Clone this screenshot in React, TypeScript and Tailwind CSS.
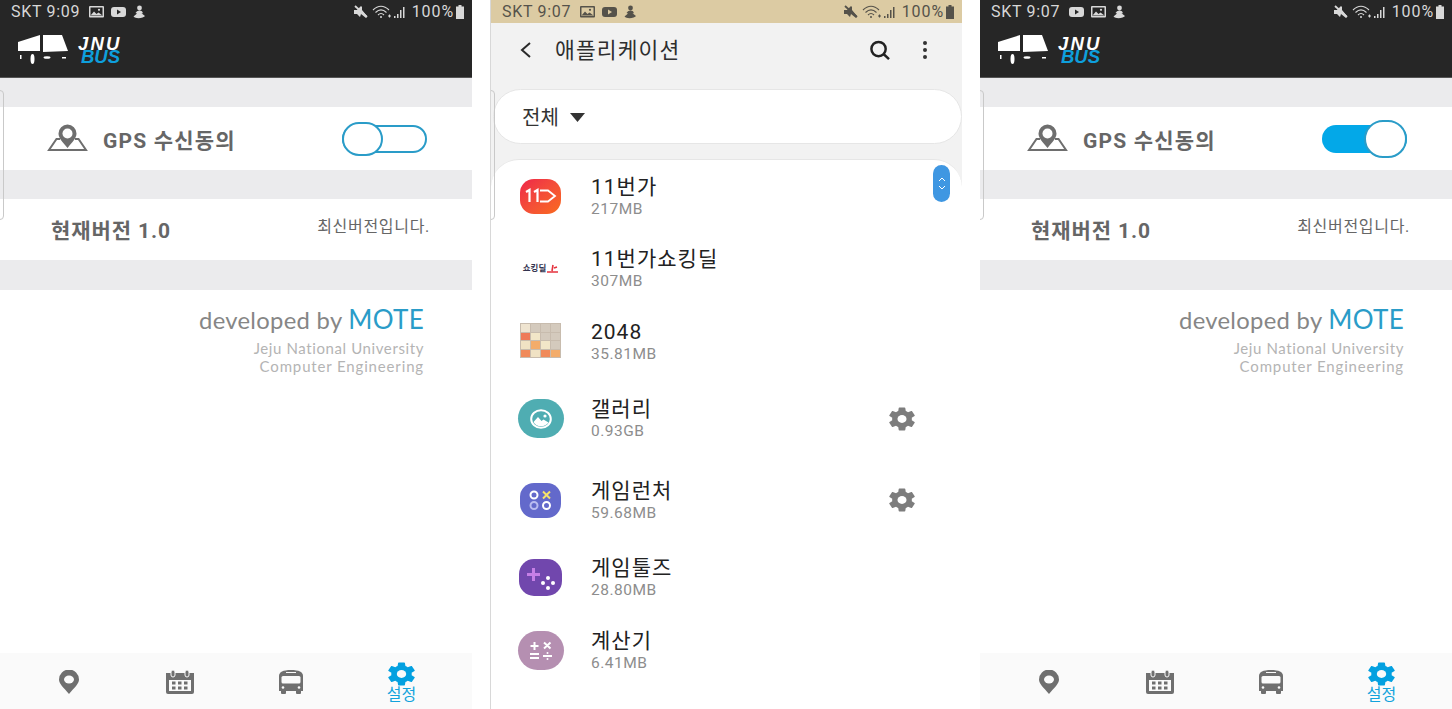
import type { ReactNode } from "react";

const KR = "font-['Roboto','Noto_Sans_CJK_KR',sans-serif]";

function StatusIcons({ dark }: { dark: boolean }) {
  const c = dark ? "#d8d8d8" : "#55524a";
  return (
    <div className="flex items-center">
      <svg width="16" height="14" viewBox="0 0 16 14" className="mr-[3px]">
        <path d="M1 5l3 0 4-4 1 1 0 3 5 6-1 2-5-4-1 3-3-3-3 0z" fill={c} />
        <path d="M2 1l12 11" stroke={c} strokeWidth="1.800" />
      </svg>
      <svg width="20" height="14" viewBox="0 0 20 14" fill="none" stroke={c} strokeWidth="1.100" className="mr-[1px]">
        <path d="M1 5c5-5 11-5 16 0" />
        <path d="M3.500 7.500c3.500-3.300 7.500-3.300 11 0" />
        <path d="M6 10c2-2 4-2 6 0" />
        <circle cx="9" cy="12" r="1" fill={c} stroke="none" />
        <path d="M16 11h3M17.500 9.500v3" />
      </svg>
      <svg width="14" height="14" viewBox="0 0 14 14" fill={c} className="mr-[5px]">
        <rect x="1" y="11" width="1.500" height="2" />
        <rect x="4" y="9" width="1.500" height="4" />
        <rect x="7" y="5" width="1.500" height="8" />
        <rect x="10" y="2" width="1.500" height="11" />
      </svg>
      <span className="text-[16px] tracking-[0.9px]" style={{ color: c }}>100%</span>
      <svg width="10" height="14" viewBox="0 0 10 14" fill={c} className="ml-[1px]">
        <path d="M3.500 0h3v1.500H9V14H1V1.500h2.500z" />
      </svg>
    </div>
  );
}

function PictureIcon({ c, bg }: { c: string; bg: string }) {
  return (
    <svg width="15" height="12" viewBox="0 0 15 12">
      <rect width="15" height="11.500" rx="1" fill={c} />
      <rect x="1.500" y="1.500" width="12" height="8.500" fill={bg} />
      <path d="M1.500 9.500l3.500-4 2.500 2.500 2-1.500 4 3z" fill={c} />
      <circle cx="10" cy="3.800" r="1.100" fill={c} />
    </svg>
  );
}

function VideoIcon({ c, bg }: { c: string; bg: string }) {
  return (
    <svg width="15" height="12" viewBox="0 0 15 12">
      <rect x="0" y="1" width="15" height="10" rx="3" fill={c} />
      <path d="M6 3.500v5l4-2.500z" fill={bg} />
    </svg>
  );
}

function PersonIcon({ c }: { c: string }) {
  return (
    <svg width="13" height="14" viewBox="0 0 13 14" fill={c}>
      <circle cx="6.500" cy="3" r="2.400" />
      <path d="M4 6.200c1.500-.8 3.500-.8 5 0l1 2-1.500 0 3.500 2.800c-1 2-9 3.500-11.500.5l3.500-3-1.500-.5z" />
    </svg>
  );
}

function StatusBar({
  time,
  dark,
  videoFirst,
}: {
  time: string;
  dark: boolean;
  videoFirst?: boolean;
}) {
  const c = dark ? "#d8d8d8" : "#55524a";
  const bg = dark ? "#262626" : "#dccba3";
  return (
    <div className={`flex h-[23px] items-center justify-between pl-[11px] pr-[7px] pt-[1px] ${dark ? "bg-[#262626]" : "bg-[#dccba3]"}`}>
      <div className="flex items-center">
        <span className="mr-[9px] text-[16px] tracking-[0.7px]" style={{ color: c }}>{time}</span>
        <div className="flex items-center gap-[7px]">
          {videoFirst ? <VideoIcon c={c} bg={bg} /> : <PictureIcon c={c} bg={bg} />}
          {videoFirst ? <PictureIcon c={c} bg={bg} /> : <VideoIcon c={c} bg={bg} />}
          <PersonIcon c={c} />
        </div>
      </div>
      <StatusIcons dark={dark} />
    </div>
  );
}

function BusLogo() {
  return (
    <div className="flex items-start">
      <svg width="52" height="31" viewBox="0 0 52 31" fill="#fff">
        <path d="M0 8L22 1v16H0z" />
        <path d="M25 1h19l6 16-25 1z" />
        <rect x="2" y="21" width="1.500" height="4" />
        <ellipse cx="14.500" cy="25" rx="2" ry="5" />
        <ellipse cx="29" cy="23.500" rx="3.500" ry="1.300" />
        <rect x="44" y="23" width="4" height="1.500" />
      </svg>
      <div className="ml-[8px] mt-[3px] flex flex-col font-['Liberation_Sans',sans-serif] text-[18.500px] font-bold italic leading-[13px]">
        <span className="tracking-[2.200px] text-white">JNU</span>
        <span className="ml-[3px] tracking-[0px] text-[#0e9fdc]">BUS</span>
      </div>
    </div>
  );
}

function MapPinIcon() {
  return (
    <svg width="41" height="29" viewBox="0 0 41 29" fill="none">
      <path d="M13 15H9.500L2 26h37l-7.500-11H28" stroke="#6e6e6e" strokeWidth="2" />
      <path d="M20.500 24c-5-6-9-10-9-14.500a9 9 0 0118 0c0 4.500-4 8.500-9 14.500z" fill="#6e6e6e" />
      <circle cx="20.500" cy="9.500" r="5" fill="#fff" />
    </svg>
  );
}

function NavPin() {
  return (
    <svg width="20" height="24" viewBox="0 0 20 24">
      <path d="M10 24C4 17 0 13.500 0 9.500a10 10 0 0120 0c0 4-4 7.500-10 14.500z" fill="#6f6f6f" />
      <ellipse cx="10" cy="9.500" rx="5" ry="4" fill="#fafafa" />
    </svg>
  );
}

function NavCalendar() {
  return (
    <svg width="28" height="24" viewBox="0 0 28 24">
      <path d="M0 3h28v19a2 2 0 01-2 2H2a2 2 0 01-2-2z" fill="#6f6f6f" />
      <rect x="5" y="0" width="4" height="7" rx="2" fill="#6f6f6f" stroke="#fafafa" strokeWidth="1" />
      <rect x="19" y="0" width="4" height="7" rx="2" fill="#6f6f6f" stroke="#fafafa" strokeWidth="1" />
      <rect x="3" y="10" width="22" height="11" fill="#fafafa" />
      <g fill="#6f6f6f">
        <rect x="6" y="11.500" width="3.500" height="3" />
        <rect x="12" y="11.500" width="3.500" height="3" />
        <rect x="18" y="11.500" width="3.500" height="3" />
        <rect x="6" y="16.500" width="3.500" height="3" />
        <rect x="12" y="16.500" width="3.500" height="3" />
        <rect x="18" y="16.500" width="3.500" height="3" />
      </g>
    </svg>
  );
}

function NavBus() {
  return (
    <svg width="24" height="24" viewBox="0 0 24 24">
      <path d="M0 6c0-4 4-6 12-6s12 2 12 6v15H0z" fill="#6f6f6f" />
      <rect x="2" y="20" width="5" height="4" rx="1" fill="#6f6f6f" />
      <rect x="17" y="20" width="5" height="4" rx="1" fill="#6f6f6f" />
      <rect x="2.500" y="6" width="19" height="7.500" rx="1.500" fill="#fafafa" />
      <rect x="7" y="2" width="10" height="1" fill="#fafafa" />
      <circle cx="4" cy="17.500" r="1.300" fill="#fafafa" />
      <circle cx="20" cy="17.500" r="1.300" fill="#fafafa" />
    </svg>
  );
}

const GEAR =
  "M19.140 12.940c.04-.3.06-.61.06-.94 0-.32-.02-.64-.07-.94l2.030-1.580c.18-.14.23-.41.12-.61l-1.920-3.320c-.12-.22-.37-.29-.59-.22l-2.390.96c-.5-.38-1.030-.7-1.620-.94l-.36-2.540c-.04-.24-.24-.41-.48-.41h-3.840c-.24 0-.43.17-.47.41l-.36 2.540c-.59.24-1.130.57-1.620.94l-2.390-.96c-.22-.08-.47 0-.59.22L2.740 8.870c-.12.21-.08.47.12.61l2.030 1.580c-.05.3-.09.63-.09.94s.02.64.07.94l-2.030 1.580c-.18.14-.23.41-.12.61l1.920 3.320c.12.22.37.29.59.22l2.390-.96c.5.38 1.030.7 1.620.94l.36 2.540c.05.24.24.41.48.41h3.840c.24 0 .44-.17.47-.41l.36-2.540c.59-.24 1.130-.56 1.620-.94l2.390.96c.22.08.47 0 .59-.22l1.920-3.320c.12-.22.07-.47-.12-.61l-2.010-1.580z";

function Gear({ color, hole, size }: { color: string; hole: string; size: string }) {
  return (
    <svg viewBox="2.500 2 19 20" preserveAspectRatio="none" className={size}>
      <path d={GEAR} fill={color} />
      <circle cx="12" cy="12" r="3.300" fill={hole} />
    </svg>
  );
}

function Toggle({ on }: { on: boolean }) {
  if (on) {
    return (
      <div className="relative h-[28px] w-[85px] rounded-full bg-[#03a8e8]">
        <div className="absolute right-0 top-[-5px] h-[38px] w-[43px] rounded-full border-2 border-[#2a9cc8] bg-white" />
      </div>
    );
  }
  return (
    <div className="relative h-[28px] w-[85px] rounded-full border-2 border-[#2a9cc8] bg-white">
      <div className="absolute left-[-2px] top-[-5px] h-[34px] w-[41px] rounded-full border-2 border-[#2a9cc8] bg-white" />
    </div>
  );
}

function EdgeOutline() {
  return <div className="absolute left-[-8px] top-[90px] h-[130px] w-[12px] rounded-[4px] border border-[#c9c9c9]" />;
}

function SettingsPanel({
  time,
  on,
  videoFirst,
}: {
  time: string;
  on: boolean;
  videoFirst?: boolean;
}) {
  return (
    <div className="relative flex h-[709px] w-[472px] shrink-0 flex-col overflow-hidden bg-white">
      <StatusBar time={time} dark videoFirst={videoFirst} />
      <div className="h-[55px] border-b border-[#555] bg-[#262626] pl-[18px] pt-[11px]">
        <BusLogo />
      </div>
      <div className="h-[29px] bg-[#ebebed]" />
      <div className="flex h-[63px] items-center justify-between pl-[47px] pr-[45px]">
        <div className="flex items-center">
          <MapPinIcon />
          <span className="ml-[15px] mt-[7px] text-[21px] font-bold tracking-[1.200px] text-[#666]">GPS 수신동의</span>
        </div>
        <Toggle on={on} />
      </div>
      <div className="h-[29px] bg-[#ebebed]" />
      <div className="flex h-[61px] items-start justify-between pl-[51px] pr-[42px]">
        <span className="mt-[17px] text-[21px] font-bold tracking-[0.9px] text-[#666]">현재버전 1.0</span>
        <span className="mt-[16px] text-[16px] tracking-[0.7px] text-[#666]">최신버전입니다.</span>
      </div>
      <div className="h-[30px] bg-[#ebebed]" />
      <div className="flex flex-1 flex-col items-end pr-[48px] pt-[13px] font-['Lato',sans-serif]">
        <div className="text-[23.800px] leading-[33px] tracking-[0.3px] text-[#868686]">
          developed by <span className="text-[26px] text-[#2a9cc8]">MOTE</span>
        </div>
        <div className="mt-[2px] text-[15px] leading-[19px] tracking-[0.6px] text-[#b4b4b4]">Jeju National University</div>
        <div className="mt-[-1px] text-[15px] leading-[19px] tracking-[0.85px] text-[#b4b4b4]">Computer Engineering</div>
      </div>
      <div className="grid h-[56px] grid-cols-[111px_111px_111px_111px] bg-[#fafafa] pl-[13px]">
        <NavCell><NavPin /></NavCell>
        <NavCell><NavCalendar /></NavCell>
        <NavCell><NavBus /></NavCell>
        <div className="flex flex-col items-center pt-[9px]">
          <Gear color="#03a0e0" hole="#fafafa" size="h-[24px] w-[27px]" />
          <span className="mt-[1px] text-[16px] leading-[16px] text-[#12a3dc]">설정</span>
        </div>
      </div>
      <EdgeOutline />
    </div>
  );
}

function NavCell({ children }: { children: ReactNode }) {
  return <div className="flex items-start justify-center pt-[17px]">{children}</div>;
}

function Icon11st() {
  return (
    <div className="flex h-[35px] w-[41px] items-center justify-center rounded-[14px] bg-gradient-to-br from-[#ee2348] to-[#f96a1a]">
      <svg width="32" height="16" viewBox="0 0 32 16" fill="none" stroke="#fff" strokeWidth="2.200">
        <path d="M1 4l3.500-2v12M9 4l3.500-2v12" />
        <path d="M15 2.500h8l7 5.500-7 5.500h-8" strokeWidth="1.800" />
      </svg>
    </div>
  );
}

function IconDeal() {
  return (
    <div className="flex w-[41px] items-center justify-center gap-[1px]">
      <span className="text-[8.500px] font-bold leading-none text-[#33334f]">쇼킹딜</span>
      <svg width="11" height="10" viewBox="0 0 11 10" fill="none" stroke="#e5333f" strokeWidth="1.600">
        <path d="M6 1l-1 6M0 8h11M7 4l3-1" />
      </svg>
    </div>
  );
}

const TILES = [
  "#efe4d0", "#d4cabd", "#d4cabd", "#d4cabd",
  "#ee7a58", "#f2e6c8", "#d4cabd", "#d4cabd",
  "#f0e2c4", "#f3ac6a", "#f2e6c8", "#d4cabd",
  "#f08a5a", "#f0e2c4", "#f08a5a", "#f3ac6a",
];

function Icon2048() {
  return (
    <div className="mt-[-2px] grid h-[35px] w-[41px] grid-cols-4 gap-[1px] bg-[#c8bcae] p-[1px]">
      {TILES.map((c, i) => (
        <div key={i} style={{ backgroundColor: c }} />
      ))}
    </div>
  );
}

function IconGallery() {
  return (
    <div className="flex h-[39px] w-[46px] items-center justify-center rounded-full bg-[#4fadb2]">
      <svg width="22" height="20" viewBox="0 0 22 20">
        <ellipse cx="11" cy="10" rx="9.800" ry="8.800" fill="none" stroke="#fff" strokeWidth="2" />
        <circle cx="15" cy="7" r="1.600" fill="#fff" />
        <path d="M3.500 13L8 8l3.500 4 2-1.500 5 3c-3 5-12.500 5-15-.5z" fill="#fff" />
      </svg>
    </div>
  );
}

function IconGameLauncher() {
  return (
    <div className="flex h-[35px] w-[41px] items-center justify-center rounded-[14px] bg-[#6369cb]">
      <svg width="23" height="21" viewBox="0 0 23 21" fill="none" strokeWidth="2">
        <circle cx="5" cy="5" r="3.500" stroke="#fff" />
        <path d="M14 1.500l7 7M21 1.500l-7 7" stroke="#f6e36a" />
        <circle cx="5" cy="15.500" r="3.500" stroke="#b9bbf0" />
        <circle cx="17.500" cy="15.500" r="3.500" stroke="#fff" />
      </svg>
    </div>
  );
}

function IconGameTools() {
  return (
    <div className="flex h-[37px] w-[43px] items-center justify-center rounded-[15px] bg-[#7147ad]">
      <svg width="29" height="24" viewBox="0 0 29 24">
        <path d="M6 2h3v5h5v3H9v5H6v-5H1V7h5z" fill="#c67fe6" />
        <g fill="#fff">
          <circle cx="22" cy="12" r="2" />
          <circle cx="17" cy="17" r="2" />
          <circle cx="27" cy="17" r="2" />
          <circle cx="22" cy="22" r="2" />
        </g>
      </svg>
    </div>
  );
}

function IconCalculator() {
  return (
    <div className="flex h-[39px] w-[46px] items-center justify-center rounded-full bg-[#b58fb1]">
      <svg width="24" height="20" viewBox="0 0 24 20" fill="none" stroke="#fff" strokeWidth="2">
        <path d="M5.500 1v8M1.500 5h8M15 1.500l6.500 6M21.500 1.500L15 7.500" />
        <path d="M1 13h9M1 17h9M14 15h9" />
        <circle cx="18.500" cy="12" r="1" fill="#fff" stroke="none" />
        <circle cx="18.500" cy="18" r="1" fill="#fff" stroke="none" />
      </svg>
    </div>
  );
}

const APPS = [
  { name: "11번가", size: "217MB", h: "h-[72px]", icon: <Icon11st /> },
  { name: "11번가쇼킹딜", size: "307MB", h: "h-[73px]", icon: <IconDeal /> },
  { name: "2048", size: "35.81MB", h: "h-[73px]", icon: <Icon2048 /> },
  { name: "갤러리", size: "0.93GB", h: "h-[81px]", icon: <IconGallery />, gear: true },
  { name: "게임런처", size: "59.68MB", h: "h-[82px]", icon: <IconGameLauncher />, gear: true },
  { name: "게임툴즈", size: "28.80MB", h: "h-[73px]", icon: <IconGameTools /> },
  { name: "계산기", size: "6.41MB", h: "h-[73px]", icon: <IconCalculator /> },
];

function AppsPanel() {
  return (
    <div className="relative flex h-[709px] w-[472px] shrink-0 flex-col overflow-hidden border-l border-[#d8d8d8] bg-[#f2f2f2]">
      <StatusBar time="SKT 9:07" dark={false} />
      <div className="flex h-[54px] items-center pl-[28px] pr-[35px]">
        <svg width="14" height="18" viewBox="0 0 14 18" fill="none" stroke="#2a2a2a" strokeWidth="2">
          <path d="M11 2L3 9l8 7" />
        </svg>
        <span className="ml-[22px] mt-[2px] flex-1 text-[21.500px] tracking-[1.100px] text-[#2e2e2e]">애플리케이션</span>
        <svg width="21" height="20" viewBox="0 0 22 21" fill="none" stroke="#222" strokeWidth="2.600">
          <circle cx="10" cy="9.500" r="7.500" />
          <path d="M15.500 15L21 20" />
        </svg>
        <div className="ml-[33px] flex w-[4px] flex-col gap-[3px]">
          <div className="h-[4px] w-[4px] rounded-full bg-[#333]" />
          <div className="h-[4px] w-[4px] rounded-full bg-[#333]" />
          <div className="h-[4px] w-[4px] rounded-full bg-[#333]" />
        </div>
      </div>
      <div className="ml-[2px] mt-[12px] flex h-[55px] items-center rounded-[28px] border border-[#e6e6e6] bg-white pl-[28px]">
        <span className="mt-[2px] text-[20px] text-[#333]">전체</span>
        <svg width="15" height="9" viewBox="0 0 15 9" className="ml-[11px] mt-[2px]">
          <path d="M0 0h15l-7.500 9z" fill="#333" />
        </svg>
      </div>
      <div className="mt-[15px] flex-1 rounded-t-[28px] border-t border-[#e6e6e6] bg-white">
        {APPS.map((app) => (
          <div key={app.name} className={`flex items-center ${app.h}`}>
            <div className="flex w-[100px] shrink-0 justify-center pr-[1px]">{app.icon}</div>
            <div className="flex-1">
              <div className="text-[21px] leading-[26px] tracking-[1px] text-[#222]">{app.name}</div>
              <div className="text-[15.500px] leading-[19px] tracking-[0.5px] text-[#8d8d8d]">{app.size}</div>
            </div>
            {app.gear && (
              <div className="pr-[47px]">
                <Gear color="#7d7d7d" hole="#fff" size="h-[24px] w-[26px]" />
              </div>
            )}
          </div>
        ))}
      </div>
      <div className="absolute left-[442px] top-[165px] flex h-[37px] w-[17px] flex-col items-center justify-center gap-[3px] rounded-full bg-[#3f97e2]">
        <svg width="8" height="5" viewBox="0 0 8 5" fill="none" stroke="#fff"><path d="M1 4l3-3 3 3" /></svg>
        <svg width="8" height="5" viewBox="0 0 8 5" fill="none" stroke="#fff"><path d="M1 1l3 3 3-3" /></svg>
      </div>
      <EdgeOutline />
    </div>
  );
}

export default function App() {
  return (
    <div className={`flex h-[709px] w-[1452px] justify-between overflow-hidden bg-white ${KR}`}>
      <SettingsPanel time="SKT 9:09" on={false} />
      <AppsPanel />
      <SettingsPanel time="SKT 9:07" on videoFirst />
    </div>
  );
}
